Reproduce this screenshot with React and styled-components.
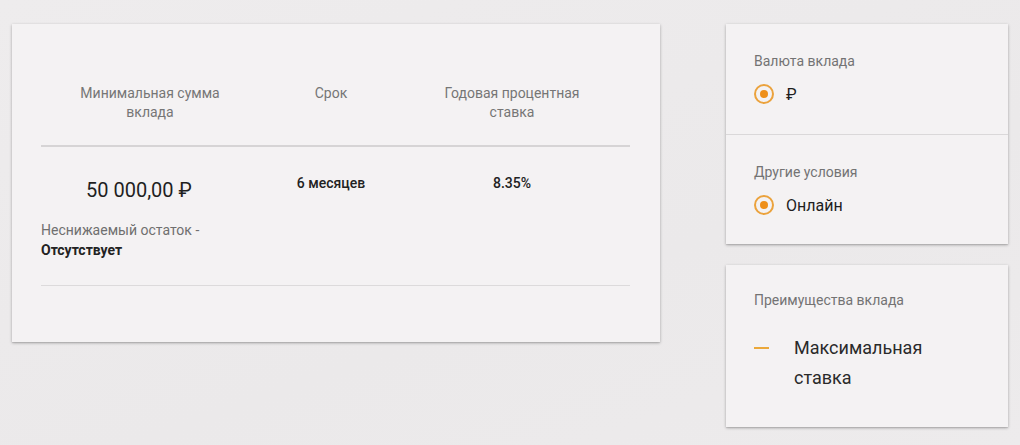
import React from 'react'
import styled, { createGlobalStyle } from 'styled-components'

const GlobalStyle = createGlobalStyle`
  body {
    margin: 0;
    background: linear-gradient(160deg, #eeeced 0%, #ebe9ea 60%, #edebec 100%);
    font-family: Roboto, "Noto Sans", sans-serif;
    min-height: 445px;
  }
`

const columns = [
  { title: 'Минимальная сумма вклада', width: 218 },
  { title: 'Срок', width: 144 },
  { title: 'Годовая процентная ставка', width: 218 },
]

function App() {
  return (
    <>
      <GlobalStyle />
      <Page>
        <MainCard>
          <HeadRow>
            {columns.map((c) => (
              <HeadCell key={c.title} $w={c.width}>{c.title}</HeadCell>
            ))}
          </HeadRow>
          <ValueRow>
            <AmountCell>
              <Amount>50 000,00 ₽</Amount>
              <Remainder>
                Неснижаемый остаток -<br />
                <b>Отсутствует</b>
              </Remainder>
            </AmountCell>
            <ValueCell $w={144}>6 месяцев</ValueCell>
            <ValueCell $w={218}>8.35%</ValueCell>
          </ValueRow>
        </MainCard>

        <Side>
          <SideCard>
            <Section>
              <SectionTitle>Валюта вклада</SectionTitle>
              <Radio>
                <RadioDot />
                <RadioLabel>₽</RadioLabel>
              </Radio>
            </Section>
            <Section $border>
              <SectionTitle>Другие условия</SectionTitle>
              <Radio>
                <RadioDot />
                <RadioLabel>Онлайн</RadioLabel>
              </Radio>
            </Section>
          </SideCard>

          <SideCard>
            <Benefits>
              <SectionTitle>Преимущества вклада</SectionTitle>
              <BenefitItem>
                <Dash />
                <BenefitText>Максимальная<br />ставка</BenefitText>
              </BenefitItem>
            </Benefits>
          </SideCard>
        </Side>
      </Page>
    </>
  )
}

export default App

const Page = styled.div`
  display: flex;
  align-items: flex-start;
  padding: 24px 12px;
`

const Card = styled.div`
  background-color: #f4f2f3;
  box-shadow: 0 1px 3px rgba(0, 0, 0, 0.28), 0 1px 1px rgba(0, 0, 0, 0.08);
`

const MainCard = styled(Card)`
  width: 648px;
  box-sizing: border-box;
  padding: 60px 30px 56px 29px;
`

const HeadRow = styled.div`
  display: flex;
  padding-bottom: 23px;
  border-bottom: 2px solid #d6d4d5;
`

const HeadCell = styled.div`
  width: ${(p) => p.$w}px;
  text-align: center;
  font-size: 14px;
  line-height: 19px;
  color: #767676;
  padding: 0 30px;
  box-sizing: border-box;
`

const ValueRow = styled.div`
  display: flex;
  align-items: flex-start;
  padding: 27px 0 25px;
  border-bottom: 1px solid #dcdadb;
`

const AmountCell = styled.div`
  width: 218px;
`

const Amount = styled.div`
  font-size: 20px;
  line-height: 24px;
  margin: 4px 0 0 45px;
  color: #1f1f1f;
`

const Remainder = styled.div`
  margin-top: 18px;
  font-size: 14px;
  line-height: 20px;
  color: #6f6f6f;

  b {
    color: #222;
    font-weight: 700;
  }
`

const ValueCell = styled.div`
  width: ${(p) => p.$w}px;
  text-align: center;
  font-size: 14px;
  line-height: 19px;
  font-weight: 500;
  color: #222;
`

const Side = styled.div`
  margin-left: 66px;
  width: 282px;
  display: flex;
  flex-direction: column;
  gap: 21px;
`

const SideCard = styled(Card)``

const Section = styled.div`
  height: 110px;
  box-sizing: border-box;
  padding: 28px 28px 0;
  border-top: ${(p) => (p.$border ? '1px solid #dad8d9' : 'none')};
`

const SectionTitle = styled.div`
  font-size: 14px;
  line-height: 18px;
  color: #737373;
`

const Radio = styled.div`
  display: flex;
  align-items: center;
  gap: 12px;
  margin-top: 14px;
`

const RadioDot = styled.span`
  width: 20px;
  height: 20px;
  box-sizing: border-box;
  border: 2px solid #eba23c;
  border-radius: 50%;
  display: flex;
  align-items: center;
  justify-content: center;

  &::after {
    content: '';
    width: 8px;
    height: 8px;
    border-radius: 50%;
    background: #ee8f1a;
  }
`

const RadioLabel = styled.span`
  font-size: 16px;
  color: #1e1e1e;
`

const Benefits = styled.div`
  height: 162px;
  box-sizing: border-box;
  padding: 26px 28px 0;
`

const BenefitItem = styled.div`
  display: flex;
  align-items: flex-start;
  margin-top: 24px;
`

const Dash = styled.span`
  width: 15px;
  height: 2px;
  background: #eba83a;
  margin: 14px 25px 0 0;
  flex-shrink: 0;
`

const BenefitText = styled.div`
  font-size: 18px;
  line-height: 30px;
  color: #2a2a2a;
`
